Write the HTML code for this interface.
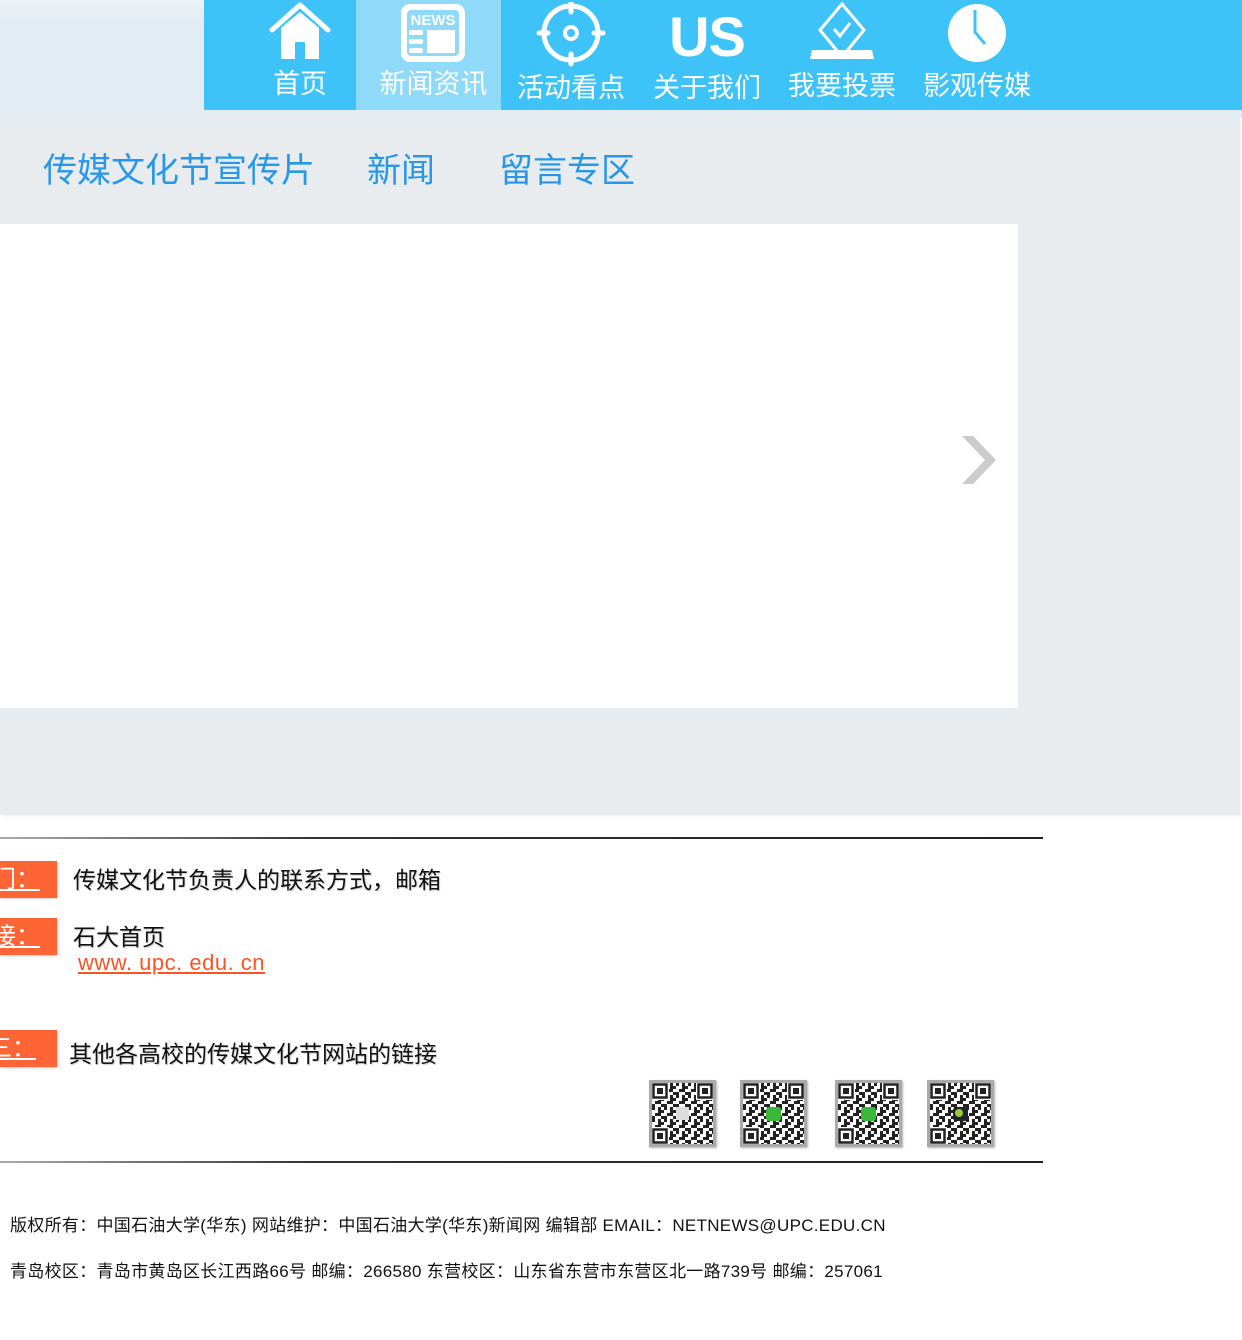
<!DOCTYPE html>
<html><head><meta charset="utf-8">
<style>
*{margin:0;padding:0;box-sizing:border-box}
body{width:1242px;height:1340px;background:#fff;position:relative;overflow:hidden;font-family:"Liberation Sans","Noto Sans CJK SC",sans-serif}
.abs{position:absolute}
.top{left:0;top:0;width:1242px;height:118px;background:linear-gradient(#eef2f5 0,#e3ebf3 22px,#e3ebf3 100%)}
.nav{left:204px;top:0;width:1038px;height:110px;background:#3ec3f8}
.act{left:356px;top:0;width:145px;height:110px;background:#8fd9f9}
.item{position:absolute;top:0;height:110px;color:#fff;text-align:center;font-size:27px}
.item span{position:absolute;left:-10px;right:-10px;top:62px;white-space:nowrap}
.item svg{position:absolute;top:2px;left:50%;transform:translateX(-50%)}
.gray{left:0;top:118px;width:1240px;height:697px;background:#e8ecee;box-shadow:2px 2px 4px rgba(0,0,0,.05)}
.tab{top:143px;font-size:34px;color:#2797e8;white-space:nowrap}
.white{left:0;top:224px;width:1018px;height:484px;background:#fff}
.line{left:0;width:1043px;height:2px;background:linear-gradient(90deg,#aaa,#333 30%,#222)}
.lab{left:0;width:57px;height:37px;background:#fd6537;box-shadow:1px 1px 2px rgba(0,0,0,.2);color:#fff;font-size:24px;line-height:37px;overflow:hidden}
.lab u{position:absolute;right:17px;top:0;white-space:nowrap}
.txt{font-size:23px;color:#111;white-space:nowrap;text-shadow:1px 1px 1px rgba(0,0,0,.2)}
.qr{top:1080px;width:67px;height:67px;background:#aaa;padding:3px;box-shadow:1px 1px 2px rgba(0,0,0,.3)}
.foot{left:10px;font-size:17px;letter-spacing:0.3px;color:#111;white-space:nowrap}
</style></head><body>
<div class="abs top"></div>
<div class="abs nav"></div>
<div class="abs act"></div>

<div class="item" style="left:250px;width:100px">
<svg width="66" height="60" viewBox="0 0 66 60"><path d="M5 28 L33 3 L61 28" fill="none" stroke="#fff" stroke-width="5" stroke-linecap="round" stroke-linejoin="round"/><path d="M14 26 L33 10 L52 26 V57 H38 V40 H28 V57 H14Z" fill="#fff"/></svg>
<span>首页</span></div>
<div class="item" style="left:366px;width:135px;">
<svg width="70" height="62" viewBox="0 0 70 62"><rect x="2" y="2" width="64" height="58" rx="9" fill="#fff"/><rect x="8" y="8" width="52" height="46" rx="4" fill="#8fd9f9"/><text x="34" y="23" font-size="15" font-weight="bold" fill="#fff" text-anchor="middle" font-family="Liberation Sans">NEWS</text><rect x="10" y="28" width="14" height="5" rx="2" fill="#fff"/><rect x="10" y="37" width="14" height="5" rx="2" fill="#fff"/><rect x="10" y="46" width="14" height="5" rx="2" fill="#fff"/><rect x="28" y="28" width="28" height="23" fill="#fff"/></svg>
<span>新闻资讯</span></div>
<div class="item" style="left:516px;width:110px">
<svg width="70" height="66" viewBox="0 0 70 66"><circle cx="35" cy="31" r="27" fill="none" stroke="#fff" stroke-width="5"/><circle cx="35" cy="31" r="6" fill="none" stroke="#fff" stroke-width="4"/><path d="M35 1V10M35 52V62M3 31H12M58 31H67" stroke="#fff" stroke-width="5" stroke-linecap="round"/></svg>
<span style="top:66px">活动看点</span></div>
<div class="item" style="left:652px;width:110px">
<svg width="90" height="60" viewBox="0 0 90 60"><text x="45" y="54" font-size="56" font-weight="900" fill="#fff" text-anchor="middle" font-family="Liberation Sans" letter-spacing="-1">US</text></svg>
<span style="top:66px">关于我们</span></div>
<div class="item" style="left:787px;width:110px">
<svg width="80" height="60" viewBox="0 0 80 60"><path d="M40 2 L62 28 L44 50 H36 L18 28Z" fill="none" stroke="#fff" stroke-width="3"/><path d="M32 27 L38 34 L48 21" fill="none" stroke="#fff" stroke-width="3"/><path d="M10 48 H70 L72 57 H8Z" fill="#fff"/></svg>
<span style="top:64px">我要投票</span></div>
<div class="item" style="left:922px;width:110px">
<svg width="64" height="62" viewBox="0 0 64 62"><ellipse cx="32" cy="31" rx="29" ry="29" fill="#fff"/><path d="M30 8 V30 L40 42" fill="none" stroke="#3ec3f8" stroke-width="3"/></svg>
<span style="top:64px">影观传媒</span></div>

<div class="abs gray"></div>
<div class="abs tab" style="left:43px">传媒文化节宣传片</div>
<div class="abs tab" style="left:367px">新闻</div>
<div class="abs tab" style="left:499px">留言专区</div>
<div class="abs white"></div>
<svg class="abs" style="left:960px;top:434px" width="38" height="52" viewBox="0 0 38 52"><path d="M2 2 H13 L36 26 L13 50 H2 L25 26Z" fill="#ccc"/></svg>

<div class="abs line" style="top:837px"></div>
<div class="abs lab" style="top:861px"><u>门：</u></div>
<div class="abs txt" style="left:73px;top:861px">传媒文化节负责人的联系方式，邮箱</div>
<div class="abs lab" style="top:918px"><u>接：</u></div>
<div class="abs txt" style="left:73px;top:918px">石大首页</div>
<div class="abs" style="left:78px;top:950px;font-size:22px;color:#fd5322;text-decoration:underline;letter-spacing:0.5px;white-space:nowrap">www. upc. edu. cn</div>
<div class="abs lab" style="top:1030px"><u style="right:21px">三：</u></div>
<div class="abs txt" style="left:69px;top:1035px">其他各高校的传媒文化节网站的链接</div>

<svg width="0" height="0" style="position:absolute"><defs>
<pattern id="qp" width="12" height="12" patternUnits="userSpaceOnUse"><rect width="12" height="12" fill="#fff"/><rect x="0" y="0" width="3" height="3" fill="#222"/><rect x="6" y="0" width="3" height="6" fill="#222"/><rect x="3" y="6" width="6" height="3" fill="#222"/><rect x="9" y="9" width="3" height="3" fill="#222"/><rect x="0" y="9" width="3" height="3" fill="#222"/><rect x="9" y="3" width="3" height="3" fill="#222"/></pattern>
<g id="qr"><rect width="61" height="61" fill="url(#qp)"/><g fill="#fff"><rect x="0" y="0" width="17" height="17"/><rect x="44" y="0" width="17" height="17"/><rect x="0" y="44" width="17" height="17"/></g><g fill="none" stroke="#222" stroke-width="2.5"><rect x="1.5" y="1.5" width="13" height="13"/><rect x="46.5" y="1.5" width="13" height="13"/><rect x="1.5" y="46.5" width="13" height="13"/></g><g fill="#222"><rect x="5" y="5" width="6" height="6"/><rect x="50" y="5" width="6" height="6"/><rect x="5" y="50" width="6" height="6"/></g></g>
</defs></svg>
<div class="abs qr" style="left:649px"><svg width="61" height="61"><use href="#qr"/><rect x="24" y="24" width="13" height="13" fill="#ddd"/></svg></div>
<div class="abs qr" style="left:740px"><svg width="61" height="61"><use href="#qr"/><rect x="23" y="24" width="15" height="14" rx="3" fill="#3ab63a"/></svg></div>
<div class="abs qr" style="left:835px"><svg width="61" height="61"><use href="#qr"/><rect x="23" y="24" width="15" height="14" rx="3" fill="#3ab63a"/></svg></div>
<div class="abs qr" style="left:927px"><svg width="61" height="61"><use href="#qr"/><rect x="23" y="24" width="15" height="14" rx="3" fill="#223"/><circle cx="29" cy="30" r="4" fill="#9c3"/></svg></div>

<div class="abs line" style="top:1161px"></div>
<div class="abs foot" style="top:1211px">版权所有：中国石油大学(华东) 网站维护：中国石油大学(华东)新闻网 编辑部 EMAIL：NETNEWS@UPC.EDU.CN</div>
<div class="abs foot" style="top:1257px">青岛校区：青岛市黄岛区长江西路66号 邮编：266580 东营校区：山东省东营市东营区北一路739号 邮编：257061</div>
</body></html>
